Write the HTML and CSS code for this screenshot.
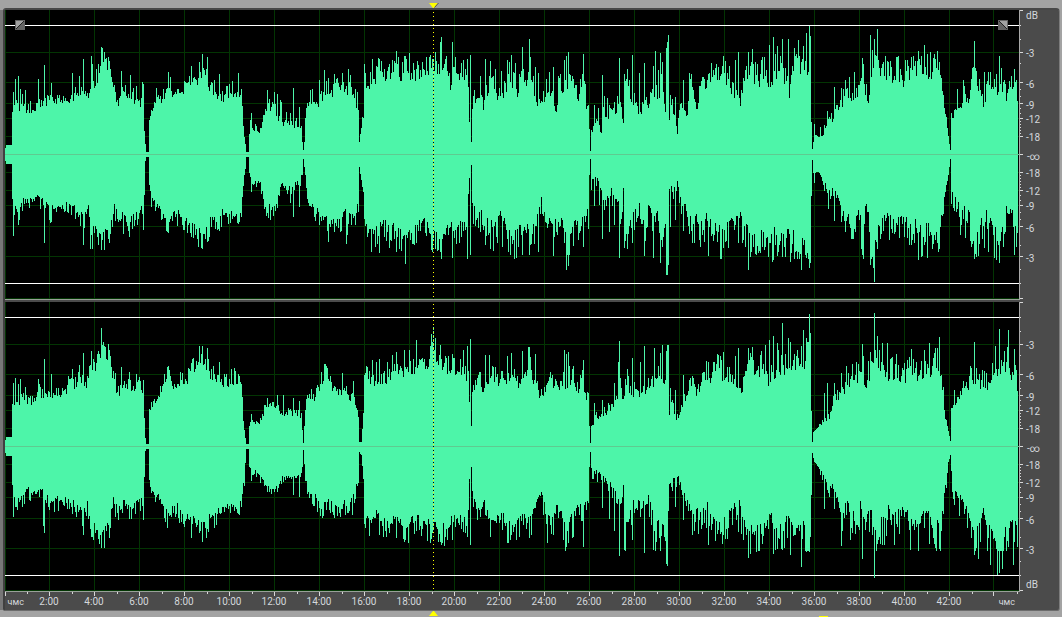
FILE: index.html
```html
<!DOCTYPE html>
<html lang="ru">
<head>
<meta charset="utf-8">
<title>Waveform</title>
<link rel="stylesheet" href="styles.css">
</head>
<body>
<main class="editor">
  <section class="track track-first">
    <div class="wave">
      <svg class="plot" viewBox="0 0 1014 289" preserveAspectRatio="none" data-channel="left"></svg>
      <div class="playhead"></div>
      <button class="fade fade-in" aria-label="Fade in"><svg viewBox="0 0 10 10"><path class="face" d="M1 1H9L1 9Z"/><path class="cut" d="M1 9L9 1"/></svg></button>
      <button class="fade fade-out" aria-label="Fade out"><svg viewBox="0 0 10 10"><path class="face" d="M1 1H9V9Z"/><path class="cut" d="M1 1L9 9"/></svg></button>
    </div>
    <div class="scale">
      <svg class="ticks" viewBox="0 0 4 289" preserveAspectRatio="none"></svg>
      <div class="levels"><span>dB</span><span>-3</span><span>-6</span><span>-9</span><span>-12</span><span>-18</span><span class="silence">-∞</span><span>-18</span><span>-12</span><span>-9</span><span>-6</span><span>-3</span><span></span></div>
    </div>
  </section>
  <section class="track">
    <div class="wave">
      <svg class="plot" viewBox="0 0 1014 289" preserveAspectRatio="none" data-channel="right"></svg>
      <div class="playhead"></div>
    </div>
    <div class="scale">
      <svg class="ticks" viewBox="0 0 4 289" preserveAspectRatio="none"></svg>
      <div class="levels"><span></span><span>-3</span><span>-6</span><span>-9</span><span>-12</span><span>-18</span><span class="silence">-∞</span><span>-18</span><span>-12</span><span>-9</span><span>-6</span><span>-3</span><span>dB</span></div>
    </div>
  </section>
  <footer class="ruler">
    <svg class="marks" viewBox="0 0 1014 4" preserveAspectRatio="none"></svg>
    <div class="times"><span class="unit">чмс</span><span>2:00</span><span>4:00</span><span>6:00</span><span>8:00</span><span>10:00</span><span>12:00</span><span>14:00</span><span>16:00</span><span>18:00</span><span>20:00</span><span>22:00</span><span>24:00</span><span>26:00</span><span>28:00</span><span>30:00</span><span>32:00</span><span>34:00</span><span>36:00</span><span>38:00</span><span>40:00</span><span>42:00</span><span class="unit unit-end">чмс</span></div>
  </footer>
</main>
<svg class="marker marker-top" viewBox="0 0 10 5"><path d="M0 0H9L5 5H4Z"/><path class="shade" d="M9.500 0L5.500 4.500"/></svg>
<svg class="marker marker-bottom" viewBox="0 0 10 5"><path d="M4 0H5L9 5H0Z"/></svg>
<div class="view-mark"></div>
<script src="app.js"></script>
</body>
</html>
```

FILE: styles.css
```css
* { box-sizing: border-box; }
html { height: 100%; }
body {
  position: relative;
  display: flex;
  height: 100%;
  min-height: 300px;
  margin: 0;
  padding: 8px 2px 6px 3px;
  overflow: hidden;
  background: linear-gradient(#777, #777) 0 10px / 3px calc(100% - 17px) no-repeat #a3a3a3;
  color: #d4d8dc;
  font: 10px/12px Roboto, "Liberation Sans", sans-serif;
}
.editor {
  display: flex;
  flex: 1;
  flex-direction: column;
  min-width: 0;
  border: solid #404040;
  border-width: 2px 1px 1px 2px;
  border-top-color: #484848;
  border-right-color: #7c7c7c;
  border-bottom-color: #6c6c6c;
  border-radius: 3px 4px 3px 2px;
  background: #4b4b4b;
}
.track {
  display: grid;
  flex: 1;
  grid-template-columns: 1fr 39px;
  min-height: 0;
}
.track-first { margin-bottom: 2px; }
.wave {
  position: relative;
  min-height: 0;
  border-right: 1px solid #a8a8a8;
  border-bottom: 1px solid #98a098;
  background: #000;
}
.plot {
  display: block;
  width: 100%;
  height: 100%;
  shape-rendering: crispEdges;
}
.grid { fill: #033503; }
.limit { fill: #fff; }
.signal { fill: #4df5a9; }
.zero { fill: #5fca90; }
.playhead {
  position: absolute;
  top: 2px;
  bottom: 0;
  left: 42.2%;
  width: 1px;
  background: repeating-linear-gradient(#ff0 0 1px, transparent 1px 2px, #000 2px 3px, transparent 3px 4px);
}
.fade {
  position: absolute;
  top: 10px;
  width: 10px;
  height: 10px;
  padding: 0;
  border: 0;
  background: #646464;
}
.fade-in { left: 10px; }
.fade-out { right: 11px; }
.fade svg { display: block; }
.face { fill: #a2a2a2; }
.cut { fill: none; stroke: #222; stroke-width: 1; }
.scale {
  display: grid;
  grid-template-columns: 4px 1fr;
  min-height: 0;
  padding-bottom: 1px;
}
.ticks, .marks {
  display: block;
  width: 100%;
  height: 100%;
  fill: #d8d8d8;
  shape-rendering: crispEdges;
}
.levels {
  display: grid;
  grid-template-rows: 12fr 38fr 31fr 21fr 14fr 18fr 19fr 17fr 18fr 15fr 22fr 30fr 34fr;
  align-items: end;
  min-height: 0;
  padding-left: 2px;
}
.levels span { min-height: 0; }
.silence { padding-left: 1px; }
.ruler {
  display: grid;
  grid-template-rows: 4px 14px;
  padding-right: 40px;
}
.times {
  display: grid;
  grid-template-columns: 215fr repeat(21, 450fr) 475fr;
  text-align: center;
}
.times span { min-width: 0; }
.unit { font-size: 9px; }
.unit-end { padding-right: 4px; text-align: right; }
.marker {
  position: absolute;
  left: 40.35%;
  width: 10px;
  height: 5px;
  fill: #ff0;
}
.marker-top { top: 3px; }
.marker-bottom { bottom: 1px; }
.shade { fill: none; stroke: #555; }
.view-mark {
  position: absolute;
  bottom: 0;
  left: 77.1%;
  width: 9px;
  height: 1px;
  background: #ff0;
}
```

FILE: app.js
```js
// Each side of a channel has a body envelope and single-column peaks, as "x:level" pairs.
const channels = {
  left: {
    up: {
      body: "5:6 6:9 11:9 12:42 14:45 16:50 20:44 27:44 34:43 36:48 48:52 56:51 66:52 74:57 82:58 87:60 88:50 90:65 95:72 97:72 99:85 102:95 105:90 109:80 112:68 115:54 118:51 122:62 127:60 131:55 137:52 140:50 143:50 144:24 145:10 146:2 148:2 149:36 151:42 155:46 158:52 165:58 168:70 173:58 180:59 185:64 192:68 197:72 200:74 202:82 204:75 206:72 209:62 215:60 221:53 225:58 233:60 239:60 241:54 242:45 243:24 245:10 246:2 248:2 249:20 250:30 252:24 260:23 262:28 264:38 268:46 275:42 278:32 286:29 293:27 301:26 302:12 303:4 304:12 305:38 307:50 313:52 318:50 322:56 326:62 332:60 338:68 343:66 347:60 351:68 354:54 358:45 359:12 361:27 363:38 364:80 367:65 370:72 375:74 380:80 384:74 389:78 392:72 396:85 399:73 404:84 409:80 412:76 420:76 425:82 431:86 434:88 437:78 441:90 445:82 449:77 450:60 452:76 460:76 465:78 468:70 469:32 470:90 471:12 472:45 475:55 479:62 483:45 485:60 489:65 492:70 494:56 500:57 505:60 508:75 513:70 517:54 520:70 527:68 530:75 533:64 537:52 541:45 546:60 550:60 556:44 558:62 563:64 568:70 573:62 578:56 582:65 585:60 586:47 588:50 589:22 590:3 591:22 594:25 602:24 603:44 607:38 612:36 616:42 618:55 621:48 623:28 624:70 628:68 631:46 635:55 637:42 641:38 644:55 649:48 653:58 656:62 658:50 662:70 665:45 667:80 668:105 669:26 671:40 672:35 675:34 677:23 679:45 683:42 687:40 689:65 693:60 697:46 699:60 703:70 707:60 710:72 716:76 720:65 724:76 729:72 733:60 737:60 740:45 743:70 747:80 753:80 757:68 760:75 763:72 766:85 768:62 771:70 775:66 778:80 782:85 783:70 789:60 792:85 797:80 801:82 805:90 808:82 810:90 811:35 812:5 813:12 814:20 818:17 822:18 824:25 829:30 835:38 840:48 846:55 850:55 854:60 857:62 861:70 863:80 865:58 869:52 871:80 874:100 877:95 878:80 883:85 888:78 892:76 897:82 903:70 908:80 914:76 920:88 926:75 932:80 937:82 940:85 942:65 945:40 947:25 949:10 950:4 951:37 957:40 963:55 968:48 972:70 978:68 983:50 988:65 994:65 999:60 1004:60 1008:56 1013:68 1017:58",
      peaks: "13:62 15:75 18:78 20:65 22:60 25:64 30:53 38:75 44:89 51:71 72:81 79:78 83:95 91:98 92:90 98:90 101:107 102:106 104:102 106:96 109:91 111:77 121:83 130:79 133:66 136:68 142:72 143:70 156:66 168:82 170:77 184:73 191:88 196:70 199:92 202:100 207:97 214:74 219:80 229:70 232:73 238:81 241:65 251:41 267:64 269:55 272:52 274:62 277:60 280:54 281:52 286:42 290:41 293:66 296:36 299:47 310:64 312:65 319:74 324:84 328:76 334:80 342:81 348:85 350:79 355:65 357:62 372:95 376:88 378:96 379:95 381:93 388:87 392:94 394:93 396:103 398:97 402:92 404:98 406:95 409:101 413:91 417:93 426:95 429:97 430:97 432:92 435:102 436:93 438:90 440:112 441:117 444:90 446:98 452:112 455:97 461:91 463:94 467:95 470:99 474:62 480:78 485:95 490:93 493:76 495:85 501:83 507:94 509:92 511:99 515:91 519:80 522:107 523:85 529:115 530:97 535:87 538:81 549:82 553:87 560:80 564:94 566:98 568:102 569:80 582:80 583:100 584:73 594:49 596:35 598:46 602:79 604:58 607:56 609:49 614:52 617:56 619:96 625:73 627:85 632:99 639:81 644:91 653:88 655:103 658:84 660:101 662:92 666:106 667:112 668:119 670:59 672:55 675:57 683:74 691:80 703:77 708:80 713:84 715:86 723:98 735:94 738:102 745:84 748:102 752:105 757:90 761:94 762:97 764:97 769:109 773:117 775:100 777:108 782:115 785:86 788:115 791:79 794:106 798:114 803:108 806:121 809:128 810:118 814:30 820:27 827:43 834:67 841:66 845:74 849:77 854:82 862:96 870:119 872:103 874:115 877:125 882:90 888:92 890:86 897:97 905:94 907:94 913:98 918:103 921:98 924:109 927:100 930:102 935:95 937:103 939:92 957:65 963:74 964:68 971:70 974:113 976:83 984:82 988:82 996:80 999:98 1001:86 1009:73 1014:85 1016:67"
    },
    down: {
      body: "5:6 6:9 11:9 12:45 15:50 18:58 22:46 27:46 33:42 41:44 46:50 50:54 58:50 66:47 74:50 80:60 86:60 88:46 90:72 93:75 97:75 101:82 106:78 110:72 114:48 118:65 124:52 127:70 134:58 142:52 144:35 145:6 146:2 148:2 149:30 151:42 157:50 163:62 168:66 173:60 178:58 185:62 191:72 196:72 201:80 207:76 211:60 217:62 223:56 230:60 238:62 241:52 243:30 245:14 246:2 248:2 249:18 252:28 256:27 260:25 264:48 268:52 272:50 277:46 281:28 286:34 292:32 298:26 302:20 303:4 305:20 307:45 310:52 315:50 320:58 327:62 333:68 340:66 344:58 348:58 354:60 358:50 359:12 361:25 363:32 364:60 366:68 371:78 376:72 383:66 388:72 393:70 400:78 408:80 415:74 423:64 430:76 436:82 442:85 446:78 450:60 455:78 462:66 466:75 469:24 470:90 471:10 472:50 478:64 484:54 488:70 495:72 500:56 505:68 512:82 518:76 527:76 533:70 537:60 541:46 546:72 550:66 556:64 561:65 566:82 570:84 574:65 580:60 585:65 588:55 589:20 590:4 591:26 595:24 600:28 603:50 607:42 611:34 614:45 618:45 621:55 623:35 625:80 631:68 636:50 640:50 645:70 648:45 653:60 658:55 661:75 664:80 666:70 667:110 669:32 672:35 677:25 680:44 684:46 688:60 692:68 697:62 702:74 706:58 710:70 716:66 720:80 726:72 732:66 736:65 739:52 743:75 747:75 751:84 756:75 761:82 767:80 771:62 775:82 780:78 786:74 793:80 798:88 802:85 807:82 810:96 811:35 812:5 813:18 818:17 822:22 828:40 831:32 836:40 842:52 847:60 853:65 859:58 863:90 865:50 869:65 872:100 874:80 878:70 884:65 889:60 893:70 900:62 908:68 914:66 918:80 922:75 927:72 933:76 938:75 941:60 944:40 948:20 950:4 951:38 957:50 963:55 968:50 972:82 978:75 983:60 988:60 993:70 998:90 1003:75 1006:55 1012:60 1014:80 1017:74",
      peaks: "13:81 14:60 18:69 22:56 44:88 50:68 75:57 83:90 90:94 92:94 98:90 101:95 104:95 109:88 115:66 123:79 129:82 137:70 143:75 155:56 167:77 168:78 184:70 190:75 195:75 202:94 205:84 207:87 215:74 219:76 239:67 241:60 251:37 268:63 270:65 275:56 290:48 293:62 299:52 315:66 328:87 334:77 346:89 347:80 351:70 371:97 375:92 379:98 386:86 389:93 396:97 405:109 432:97 438:95 440:97 452:103 467:104 470:100 485:90 490:94 502:92 508:97 510:100 516:96 522:100 529:100 538:97 553:101 564:88 566:115 568:111 578:85 583:92 594:51 599:50 602:84 609:77 614:70 619:103 624:93 627:94 632:88 644:101 653:103 660:108 662:90 666:120 667:120 668:110 670:72 675:65 683:76 708:101 714:80 723:93 738:88 748:115 750:102 756:100 764:95 772:107 773:105 782:102 785:102 790:107 801:115 806:103 809:113 810:108 814:28 834:66 845:77 853:84 862:100 863:104 870:110 873:113 874:127 889:85 909:90 918:105 921:100 927:103 935:85 939:88 960:80 965:83 974:96 978:101 984:93 988:97 994:103 996:105 999:108 1003:92 1014:96 1016:92"
    }
  },
  right: {
    up: {
      body: "5:6 6:9 11:9 12:42 15:42 18:40 22:46 27:44 34:43 38:60 41:50 48:52 56:50 66:54 74:60 82:66 87:60 90:75 95:78 99:88 102:98 105:95 109:85 112:70 115:58 119:52 125:60 131:58 137:60 143:56 144:26 145:8 146:2 148:2 149:32 152:42 158:50 165:66 168:75 173:58 180:64 187:66 192:75 199:80 205:84 209:72 215:68 221:64 227:60 235:64 240:60 242:48 243:24 245:8 246:2 248:2 249:20 252:24 256:24 260:23 262:30 267:42 276:38 282:32 290:32 296:32 301:28 303:3 305:38 308:50 314:46 321:62 325:70 330:60 336:55 344:52 350:48 354:42 358:30 359:4 361:4 363:30 364:68 368:68 374:62 380:64 386:66 392:72 398:74 404:72 412:76 418:80 423:76 430:84 433:100 436:82 441:80 447:76 452:76 458:74 463:74 466:70 468:72 469:40 471:20 472:50 476:65 482:58 485:62 492:66 497:60 502:60 508:72 516:62 522:62 527:74 531:72 537:58 541:47 548:68 556:60 564:62 572:66 578:58 583:62 586:46 588:55 589:20 590:3 591:20 597:26 603:30 610:38 616:44 619:60 623:40 625:68 631:52 636:55 640:48 646:56 652:62 656:66 661:58 666:60 668:70 669:26 672:42 677:24 681:42 687:48 690:60 697:46 703:70 710:68 717:76 723:70 730:70 736:58 740:46 746:78 752:82 757:72 763:80 768:66 774:74 779:78 786:75 792:78 798:80 805:85 810:90 811:36 812:4 813:14 817:18 822:24 829:30 835:45 841:55 847:60 853:70 859:66 866:62 873:85 879:84 885:70 891:72 897:72 903:68 912:74 918:70 924:72 930:74 937:82 941:75 944:35 947:20 950:5 951:36 957:45 965:50 969:64 976:66 983:60 990:62 995:74 1002:80 1009:66 1015:80 1017:50",
      peaks: "13:63 15:68 18:62 20:67 25:59 38:67 44:87 51:72 68:70 72:77 79:81 83:93 91:95 98:93 101:118 102:101 105:98 109:96 115:73 121:79 129:74 136:72 143:66 167:79 191:83 199:100 202:100 207:98 213:80 219:84 231:77 234:78 239:69 251:32 267:48 277:51 283:51 293:48 299:45 321:74 324:82 330:70 342:73 353:65 367:79 372:86 376:84 379:87 387:84 392:91 396:94 404:96 409:96 416:106 430:100 431:112 433:119 435:108 440:101 445:90 452:92 463:96 467:100 470:107 480:74 485:91 489:91 495:79 507:90 511:93 522:95 528:99 529:99 535:92 564:96 566:92 568:94 583:86 594:43 602:46 614:63 618:84 619:105 627:77 632:88 640:84 644:100 654:98 658:80 660:93 662:101 666:95 667:101 668:101 670:58 675:56 683:71 723:94 735:90 738:98 748:98 752:94 761:95 765:101 769:106 773:110 777:103 782:123 788:108 790:104 803:116 806:108 809:132 810:113 824:53 827:63 834:63 841:73 846:80 862:102 863:90 870:94 874:133 877:110 882:103 887:103 896:92 911:97 924:96 929:103 937:98 939:109 954:56 963:65 971:78 974:104 995:100 999:117 1004:95 1007:99 1008:116 1014:92"
    },
    down: {
      body: "5:6 6:9 11:9 12:38 15:55 18:52 22:50 27:42 33:46 41:42 46:50 52:55 60:50 68:50 76:60 83:66 87:55 90:82 97:80 104:88 109:70 114:48 118:62 124:55 130:64 137:55 142:50 144:30 145:4 146:2 148:2 149:30 152:42 158:50 164:60 170:65 175:58 182:66 188:72 194:74 200:74 206:82 210:68 218:64 225:60 232:60 239:60 242:48 244:30 246:2 248:2 249:20 252:24 258:26 262:30 267:42 276:38 282:30 292:32 298:30 302:20 303:3 305:30 308:44 315:50 321:64 328:52 335:60 344:56 352:54 356:38 358:33 359:5 361:8 363:30 364:66 370:72 377:66 383:74 390:70 398:74 406:80 415:70 424:74 431:78 438:82 446:80 452:72 458:72 463:70 467:78 469:30 471:20 473:50 479:62 484:58 490:80 498:66 503:72 508:80 514:75 520:76 526:70 533:66 537:56 541:48 547:74 553:66 558:60 565:82 572:72 578:60 585:55 588:50 589:22 590:5 591:22 597:24 603:32 610:36 616:45 619:60 623:38 625:85 631:60 636:50 642:60 648:52 654:78 660:75 667:90 669:35 677:28 682:45 688:60 692:66 700:68 707:60 714:70 722:72 730:66 738:52 743:75 750:80 758:85 764:80 770:70 776:82 785:75 792:72 798:80 806:80 810:96 811:40 812:6 814:15 820:22 826:36 834:40 842:65 848:58 855:72 860:60 865:80 870:60 875:85 882:75 889:62 896:65 903:65 908:58 912:85 918:70 925:65 931:75 937:80 941:78 944:50 948:15 950:8 952:42 958:50 965:60 969:70 975:85 983:65 989:85 995:88 1000:95 1004:88 1011:75 1017:75",
      peaks: "13:70 15:60 22:60 43:79 44:86 83:88 91:90 92:90 101:100 104:101 109:91 115:70 129:72 143:73 167:81 191:82 199:86 202:95 207:82 239:68 251:34 277:45 293:48 299:50 320:69 348:66 352:68 379:88 386:90 396:91 404:95 405:93 427:92 431:92 440:95 441:98 452:93 467:90 470:98 490:90 508:96 510:93 516:93 529:91 553:88 563:93 566:100 568:96 583:100 602:61 609:72 614:84 619:109 624:103 632:93 644:106 653:103 655:104 660:104 666:117 667:119 675:60 683:73 708:98 723:88 738:85 743:93 748:111 750:107 756:105 773:107 777:102 782:103 790:108 801:120 806:105 809:105 824:62 834:62 841:99 850:93 862:112 874:131 884:98 894:98 910:103 918:104 939:102 940:101 974:108 978:112 990:118 997:128 999:126 1002:122 1013:118"
    }
  }
};

const ORIGIN = 5;
const WIDTH = 1014;
const CENTER = 144;
const BODY_LIMIT = 104;

const parse = text => text.split(" ").map(pair => pair.split(":").map(Number));

function levels(side, seed, spread) {
  const body = parse(side.body);
  const peaks = new Map(parse(side.peaks));
  const result = [];
  let state = seed;
  const random = () => (state = (state * 16807) % 2147483647) / 2147483647;
  let k = 0;
  for (let x = ORIGIN; x < ORIGIN + WIDTH - 1; x++) {
    while (k < body.length - 2 && x >= body[k + 1][0]) k++;
    const [x0, a] = body[k];
    const [x1, b] = body[k + 1];
    let level = a + (b - a) * (x - x0) / (x1 - x0);
    // The later part of the recording is more dynamic than the opening.
    const grain = level > 20 ? Math.max(level, 35) / 60 * (x > 470 ? 1.4 : 1) : 0;
    const r = random();
    level += grain * (r > 0.6 ? 3 + random() * spread : r * 12 - 4);
    level = Math.min(level, BODY_LIMIT);
    result.push(Math.round(Math.max(level, peaks.get(x) || 0)));
  }
  return result;
}

const rect = (name, x, y, w, h) => `<rect class="${name}" x="${x}" y="${y}" width="${w}" height="${h}"/>`;
const column = i => (i === 0 ? 0 : i === 22 ? 988 : i * 45 - 1);

document.querySelectorAll(".plot").forEach((plot, n) => {
  const data = channels[plot.dataset.channel];
  let out = "";
  for (let i = 0; i <= 22; i++) out += rect("grid", column(i), 0, 1, 289);
  for (const y of [42, 72, 93, 108, 126, 162, 180, 195, 216, 246, 288]) out += rect("grid", 0, y, WIDTH, 1);
  out += rect("limit", 0, 15, WIDTH, 1) + rect("limit", 0, 273, WIDTH, 1);
  const up = levels(data.up, 11117 + n * 70, 8);
  const down = levels(data.down, 90733 + n * 31, 12);
  const d = up.map((u, x) => `M${x} ${CENTER - u}h1v${u + down[x] + 1}h-1z`).join("");
  out += `<path class="signal" d="${d}"/>` + rect("zero", 0, CENTER, WIDTH, 1);
  plot.innerHTML = out;
});

document.querySelectorAll(".ticks").forEach(ticks => {
  let out = "";
  for (const y of [0, 42, 72, 93, 108, 126, 144, 162, 180, 195, 216, 246, 288]) out += rect("tick", 0, y, 3, 1);
  for (const y of [15, 29, 53, 79, 86, 98, 103, 111, 114, 117, 120, 123]) {
    out += rect("tick", 0, y, 1, 1) + rect("tick", 0, 288 - y, 1, 1);
  }
  ticks.innerHTML = out;
});

let marks = "";
for (let i = 0; i <= 22; i++) {
  marks += rect("mark", column(i), 0, 1, 4) + rect("mark", i * 45 + 22, 0, 1, 2);
}
document.querySelector(".marks").innerHTML = marks;
```
